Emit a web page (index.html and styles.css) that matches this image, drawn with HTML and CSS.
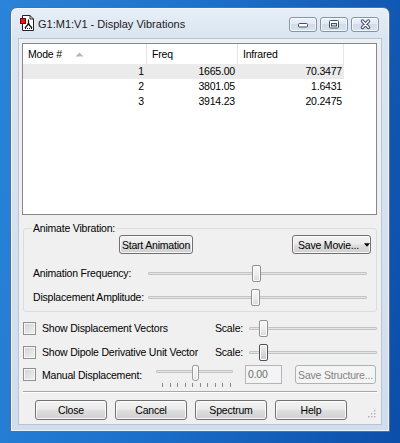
FILE: index.html
```html
<!DOCTYPE html>
<html>
<head>
<meta charset="utf-8">
<link rel="stylesheet" href="styles.css">
</head>
<body>
<div class="desktop">
  <div class="window">
    <div class="titlebar">
      <svg class="app-icon" width="14" height="16" viewBox="0 0 14 16">
        <path d="M2.5 0.5 H10 L13.5 4 V15.5 H2.5 Z" fill="#fff" stroke="#222"/>
        <path d="M10 0.5 V4 H13.5" fill="none" stroke="#222"/>
        <path d="M8.5 4.5 V9 L5 13 M8.5 9 L12 13" fill="none" stroke="#111" stroke-width="1.2"/>
        <circle cx="8.5" cy="9" r="1.1" fill="#111"/>
        <path d="M5 13.5 H12.5" stroke="#111" stroke-dasharray="1 1"/>
        <rect x="0.5" y="3.5" width="5" height="5" fill="#e8141b" stroke="#7a0000"/>
      </svg>
      <span class="title">G1:M1:V1 - Display Vibrations</span>
      <div class="caption">
        <div class="cap-btn">
          <svg width="26" height="13" viewBox="0 0 26 13"><rect x="8.5" y="5.5" width="9" height="3.5" rx="1" fill="#fff" stroke="#3d4d63"/></svg>
        </div>
        <div class="cap-btn">
          <svg width="26" height="13" viewBox="0 0 26 13"><rect x="8.5" y="2.5" width="9" height="7.5" rx="1" fill="#fff" stroke="#3d4d63"/><rect x="10.5" y="5.5" width="5" height="2.5" fill="#d8e2ee" stroke="#3d4d63"/></svg>
        </div>
        <div class="cap-btn">
          <svg width="26" height="13" viewBox="0 0 26 13"><path d="M10.5 3 L16.5 9.5 M16.5 3 L10.5 9.5" stroke="#3d4d63" stroke-width="3.4" stroke-linecap="round"/><path d="M10.5 3 L16.5 9.5 M16.5 3 L10.5 9.5" stroke="#fff" stroke-width="1.5" stroke-linecap="round"/></svg>
        </div>
      </div>
    </div>

    <div class="client">
      <div class="listview">
        <div class="lv-header">
          <div class="hc hc1"><span class="hc-label">Mode #</span>
            <svg class="sort" width="9" height="5" viewBox="0 0 9 5"><path d="M0.5 4.5 L4.5 0.5 L8.5 4.5 Z" fill="#b4b8bd"/></svg>
          </div>
          <div class="hc hc2">Freq</div>
          <div class="hc hc3">Infrared</div>
          <div class="hc hc4"></div>
        </div>
        <div class="lv-row hot">
          <div class="cell c1">1</div><div class="cell c2">1665.00</div><div class="cell c3">70.3477</div>
        </div>
        <div class="lv-row">
          <div class="cell c1">2</div><div class="cell c2">3801.05</div><div class="cell c3">1.6431</div>
        </div>
        <div class="lv-row">
          <div class="cell c1">3</div><div class="cell c2">3914.23</div><div class="cell c3">20.2475</div>
        </div>
      </div>

      <fieldset class="group">
        <legend>Animate Vibration:</legend>
        <div class="grp-top">
          <button class="btn btn-start">Start Animation</button>
          <button class="btn btn-movie">Save Movie...<svg class="drop" width="7" height="4" viewBox="0 0 7 4"><path d="M0 0 H7 L3.5 4 Z" fill="#000"/></svg></button>
        </div>
        <div class="slider-row first">
          <span class="slider-label">Animation Frequency:</span>
          <div class="slider wide">
            <div class="track"></div>
            <div class="thumb" style="left:104px"></div>
          </div>
        </div>
        <div class="slider-row">
          <span class="slider-label">Displacement Amplitude:</span>
          <div class="slider wide">
            <div class="track"></div>
            <div class="thumb" style="left:103px"></div>
          </div>
        </div>
      </fieldset>

      <div class="cb-row row-a">
        <div class="cb-main"><span class="check"></span><span class="cb-label">Show Displacement Vectors</span></div>
        <span class="scale-label">Scale:</span>
        <div class="slider scale">
          <div class="track"></div>
          <div class="thumb" style="left:10px"></div>
        </div>
      </div>

      <div class="cb-row row-b">
        <div class="cb-main"><span class="check"></span><span class="cb-label">Show Dipole Derivative Unit Vector</span></div>
        <span class="scale-label">Scale:</span>
        <div class="slider scale">
          <div class="track"></div>
          <div class="thumb focus" style="left:10px"></div>
        </div>
      </div>

      <div class="cb-row row-c">
        <div class="cb-main manual"><span class="check"></span><span class="cb-label">Manual Displacement:</span></div>
        <div class="mslider">
          <div class="mtrack-area">
            <div class="mtrack"></div>
            <div class="mthumb" style="left:36px"></div>
          </div>
          <div class="ticks">
            <i></i><i></i><i></i><i></i><i></i><i></i><i></i><i></i><i></i><i></i>
          </div>
        </div>
        <div class="textbox">0.00</div>
        <button class="btn disabled save-structure">Save Structure...</button>
      </div>

      <div class="sep"></div>

      <div class="footer">
        <button class="btn fbtn">Close</button>
        <button class="btn fbtn">Cancel</button>
        <button class="btn fbtn">Spectrum</button>
        <button class="btn fbtn">Help</button>
      </div>

      <svg class="grip" width="10" height="9" viewBox="0 0 10 9">
        <g fill="#fff"><rect x="9" y="1" width="1" height="1"/><rect x="6" y="4" width="1" height="1"/><rect x="9" y="4" width="1" height="1"/><rect x="3" y="7" width="1" height="1"/><rect x="6" y="7" width="1" height="1"/><rect x="9" y="7" width="1" height="1"/></g>
        <g fill="#b3b3b3"><rect x="8" y="0" width="1.5" height="1.5"/><rect x="5" y="3" width="1.5" height="1.5"/><rect x="8" y="3" width="1.5" height="1.5"/><rect x="2" y="6" width="1.5" height="1.5"/><rect x="5" y="6" width="1.5" height="1.5"/><rect x="8" y="6" width="1.5" height="1.5"/></g>
      </svg>
    </div>
  </div>
</div>
</body>
</html>
```

FILE: styles.css
```css
* { box-sizing: border-box; }
html, body { margin: 0; padding: 0; }
body {
  font-family: "Liberation Sans", Arial, sans-serif;
  font-size: 10.5px;
  letter-spacing: -0.2px;
  color: #000;
}

/* base push button */
.btn {
  height: 100%;
  border: 1px solid #707070;
  border-radius: 3px;
  background: linear-gradient(#f3f3f3, #ebebeb 45%, #dddddd 55%, #d0d0d0);
  box-shadow: inset 0 0 0 1px rgba(255,255,255,0.8);
  font: inherit;
  letter-spacing: inherit;
  color: #000;
  padding: 0;
  margin: 0;
  display: flex;
  align-items: center;
  justify-content: center;
  white-space: nowrap;
  flex: none;
}
.btn.disabled {
  border-color: #adb2b5;
  background: #f4f4f4;
  box-shadow: none;
  color: #838383;
}

.desktop {
  width: 400px;
  height: 443px;
  overflow: hidden;
  padding: 7px 0 0 10px;
  background: linear-gradient(100deg, #2a84d9 0%, #1b70cb 45%, #0c4ea9 100%);
}

.window {
  width: 380px;
  height: 425px;
  border: 1px solid #5a6f88;
  border-radius: 7px 7px 0 0;
  background: linear-gradient(#e7eef7 0, #dae5f1 30px, #d0ddec 100%);
  box-shadow: inset 0 0 0 1px rgba(255,255,255,0.55);
  padding: 0 7px 6px;
  display: flex;
  flex-direction: column;
}

.titlebar {
  height: 30px;
  display: flex;
  align-items: flex-start;
  flex: none;
}
.app-icon { margin: 7px 0 0 2px; flex: none; }
.title {
  font-size: 11px;
  letter-spacing: 0;
  line-height: 14px;
  margin: 9px 0 0 4px;
  color: #1b1b1b;
  white-space: nowrap;
}
.caption {
  margin: 9px 3px 0 auto;
  display: flex;
  gap: 3px;
}
.cap-btn {
  width: 28px;
  height: 15px;
  border: 1px solid #8295ad;
  border-radius: 3px;
  background: linear-gradient(#eef3f9, #dfe7f1 50%, #d1dcea 50%, #d9e3ef);
  box-shadow: inset 0 0 0 1px rgba(255,255,255,0.7);
  display: flex;
}

.client {
  flex: 1;
  background: #f0f0f0;
  border: 1px solid #b7c5d5;
  display: flex;
  flex-direction: column;
  position: relative;
}

/* list view */
.listview {
  margin: 4px 4px 0 3px;
  height: 172px;
  border: 1px solid #828790;
  background: #fff;
  flex: none;
}
.lv-header { display: flex; height: 20px; }
.hc {
  border-right: 1px solid #e5e5e5;
  padding-left: 5px;
  line-height: 20px;
  white-space: nowrap;
}
.hc1 { width: 124px; display: flex; align-items: center; }
.hc-label { width: 47px; }
.sort { display: block; }
.hc2 { width: 91px; }
.hc3 { width: 106px; }
.hc4 { flex: 1; border-right: none; }

.lv-row { display: flex; height: 15px; line-height: 15px; }
.cell { text-align: right; padding-right: 3px; }
.c1 { width: 124px; }
.c2 { width: 91px; }
.c3 { width: 106px; padding-right: 2px; }
.lv-row.hot .cell { background: #ebebeb; }

/* group box */
.group {
  margin: 7px 4px 0 4px;
  border: 1px solid #d5dfe5;
  border-radius: 3px;
  padding: 0 5px 5px 8px;
  min-width: 0;
  flex: none;
}
.group legend {
  padding: 0 1px;
  line-height: 13px;
}
.grp-top { display: flex; height: 19px; }
.btn.btn-start { margin-left: 87px; width: 74px; }
.btn.btn-movie { margin-left: auto; width: 79px; padding-left: 5px; justify-content: flex-start; }
.btn-movie .drop { margin-left: 5px; }

.slider-row { display: flex; align-items: center; height: 18px; margin-top: 6px; }
.slider-row.first { margin-top: 10px; }
.slider-label { width: 116px; padding-left: 1px; white-space: nowrap; flex: none; }

.slider {
  position: relative;
  height: 18px;
  display: flex;
  align-items: center;
}
.slider.wide { flex: 1; padding-right: 4px; }
.slider.scale { width: 128px; flex: none; }
.track {
  flex: 1;
  height: 3px;
  border: 1px solid #c3c3c3;
  background: #e4e4e4;
  border-radius: 1px;
}
.thumb {
  position: absolute;
  top: 1px;
  width: 9px;
  height: 17px;
  border: 1px solid #8f8f8f;
  border-radius: 2px;
  background: linear-gradient(#f8f8f8, #ececec 55%, #dadada);
  box-shadow: inset 0 0 0 1px #fdfdfd;
}
.thumb.focus {
  border-color: #4f4f4f;
  background: linear-gradient(#efefef, #d8d8d8 55%, #c9c9c9);
}

/* checkbox rows */
.cb-row {
  display: flex;
  align-items: center;
  height: 20px;
  margin: 4px 4px 0 4px;
  flex: none;
}
.cb-row.row-a { margin-top: 6px; }
.cb-row.row-c { margin-top: 3px; height: 19px; align-items: flex-start; }
.cb-main { width: 192px; display: flex; align-items: center; white-space: nowrap; flex: none; }
.cb-main.manual { width: 133px; height: 19px; }
.check {
  width: 13px;
  height: 13px;
  border: 1px solid #8e8f8f;
  background: linear-gradient(135deg, #cfd1d4, #f2f2f2);
  box-shadow: inset 0 0 0 1px #f6f6f6;
  flex: none;
}
.cb-label { margin-left: 6px; }
.scale-label { width: 34px; flex: none; }

.mslider { width: 77px; flex: none; display: flex; flex-direction: column; }
.mtrack-area { position: relative; height: 16px; }
.mtrack {
  margin-top: 5px;
  height: 3px;
  border: 1px solid #c3c3c3;
  background: #e4e4e4;
  border-radius: 1px;
}
.mthumb {
  position: absolute;
  top: 0;
  width: 7px;
  height: 16px;
  border: 1px solid #9a9a9a;
  border-radius: 2px 2px 3px 3px;
  background: linear-gradient(#f8f8f8, #e6e6e6);
  box-shadow: inset 0 0 0 1px #fdfdfd;
}
.ticks {
  margin: 2px 0 0 6px;
  width: 69px;
  height: 4px;
  display: flex;
  justify-content: space-between;
}
.ticks i { display: block; width: 1px; height: 4px; background: #8a8a8a; }

.textbox {
  margin-left: 12px;
  width: 37px;
  height: 19px;
  border: 1px solid #b2b6ba;
  background: #f4f4f4;
  color: #6d6d6d;
  padding-left: 2px;
  line-height: 17px;
  flex: none;
}
.btn.save-structure { margin-left: 13px; width: 81px; height: 19px; }

.sep {
  margin: 7px 4px 0 4px;
  height: 2px;
  border-top: 1px solid #a8a8a8;
  border-bottom: 1px solid #ffffff;
  flex: none;
}

.footer {
  display: flex;
  gap: 8px;
  margin: 7px 0 0 16px;
  height: 20px;
  flex: none;
}
.btn.fbtn { width: 72px; }

.grip {
  position: absolute;
  right: 5px;
  bottom: 5px;
}
```
